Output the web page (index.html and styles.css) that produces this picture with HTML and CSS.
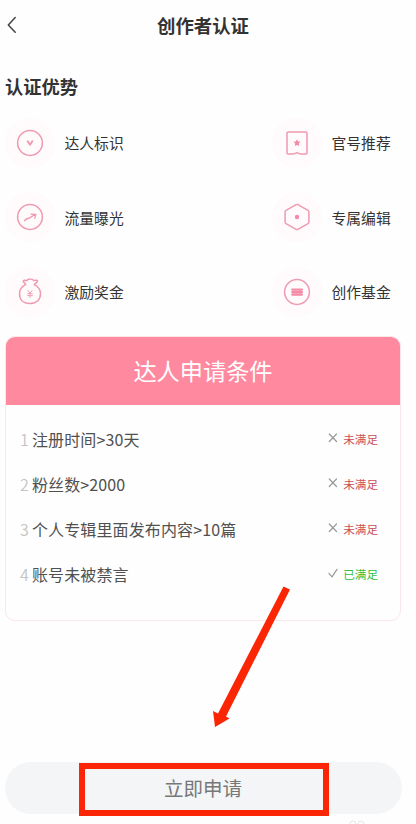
FILE: index.html
```html
<!DOCTYPE html>
<html lang="zh-CN">
<head>
<meta charset="utf-8">
<title>创作者认证</title>
<link rel="stylesheet" href="styles.css">
</head>
<body>
<div class="screen">
  <header class="topbar">
    <svg class="back" viewBox="0 0 10 18"><path d="M8.2 1.5 1.3 9l6.9 7.3"/></svg>
    <h1>创作者认证</h1>
  </header>
  <h2>认证优势</h2>
  <section class="benefits">
    <div class="benefit"><span class="bubble"><svg viewBox="0 0 30 30"><circle cx="15" cy="15" r="12.4"/><path class="thick" d="m12.7 13.2 2.3 3.5 2.3-3.5"/></svg></span><span>达人标识</span></div>
    <div class="benefit"><span class="bubble"><svg viewBox="0 0 30 30"><path d="M6.3 3.9h17.4q1.3 0 1.3 1.3v19.9q0 1-1 1h-5.5L15 24.6l-3.5 1.5H6q-1 0-1-1V5.2q0-1.3 1.3-1.3Z"/><path class="solid" d="m15 11.2 1.1 2.3 2.5.3-1.8 1.8.4 2.5-2.2-1.2-2.2 1.2.4-2.5-1.8-1.8 2.5-.3Z"/></svg></span><span>官号推荐</span></div>
    <div class="benefit"><span class="bubble"><svg viewBox="0 0 30 30"><circle cx="15" cy="15" r="12.4"/><path class="soft" d="M9.4 18.8c2.2-3 4.2-2.1 6-3.4 1.4-1 2.6-1.7 5-2.8m-4.5-.5 4.9.4-1 3.8"/></svg></span><span>流量曝光</span></div>
    <div class="benefit"><span class="bubble"><svg viewBox="0 0 30 30"><path d="M14.1 2.7q.9-.5 1.8 0L26 8.4q.9.5.9 1.5v10.2q0 1-.9 1.5l-10.1 5.7q-.9.5-1.8 0L4 21.6q-.9-.5-.9-1.5V9.9q0-1 .9-1.5Z"/><circle class="solid" cx="15" cy="15" r="2.2"/></svg></span><span>专属编辑</span></div>
    <div class="benefit"><span class="bubble"><svg viewBox="0 0 30 30"><path d="M10.8 7.4 8.4 4.8q-.4-1.4 1.2-1.6l2.3.3q1-1.6 3.6-1.5 2 0 3.1 1.4l2.8-.2q1.5.3.8 1.7l-3 2.7m-8.4-.2c-4.5 2.5-6.3 6-6.3 9.3 0 6.6 4.5 9.9 10.5 9.9s10.5-3.5 10.5-9.9c0-3.4-2-7-6.300-9.100"/><path class="soft thin" d="m13 13.600 2 2.600 2-2.600m-2 2.600v4.300m-2.400-3.800h4.800m-4.800 1.900h4.800"/></svg></span><span>激励奖金</span></div>
    <div class="benefit"><span class="bubble"><svg viewBox="0 0 30 30"><circle cx="15" cy="15" r="12.4"/><path class="bars" d="M10.2 12.6h9.800M10.200 15.100h9.800M10.200 17.600h9.800"/></svg></span><span>创作基金</span></div>
  </section>
  <section class="card">
    <h3>达人申请条件</h3>
    <ol>
      <li><i>1</i><span class="rule">注册时间&gt;30天</span><svg class="mark" viewBox="0 0 10 10"><path d="m1.3 1 7.2 7.5m0-7.5L1.3 8.5"/></svg><b>未满足</b></li>
      <li><i>2</i><span class="rule">粉丝数&gt;2000</span><svg class="mark" viewBox="0 0 10 10"><path d="m1.3 1 7.2 7.5m0-7.5L1.3 8.5"/></svg><b>未满足</b></li>
      <li><i>3</i><span class="rule">个人专辑里面发布内容&gt;10篇</span><svg class="mark" viewBox="0 0 10 10"><path d="m1.3 1 7.2 7.5m0-7.5L1.3 8.5"/></svg><b>未满足</b></li>
      <li><i>4</i><span class="rule">账号未被禁言</span><svg class="mark" viewBox="0 0 10 10"><path d="m1 5.3 3 3.5L9 1.3"/></svg><b class="ok">已满足</b></li>
    </ol>
  </section>
  <button class="apply">立即申请<span class="highlight"></span></button>
  <svg class="pointer" viewBox="0 0 80 144"><path d="m73.500 .5 6.500 3L16 130.500l3.500 2L5 141 3 125l5 2.500Z"/></svg>
  <svg class="trace" viewBox="0 0 16 5"><path d="M1 5V4q0-3 3-3t3 3v1m2 0V4q0-3 3-3t3 3v1"/></svg>
</div>
</body>
</html>
```
FILE: styles.css
```css
* { box-sizing: border-box; }
body {
  margin: 0;
  background: #fefefe;
  color: #333;
  font-family: "Noto Sans CJK SC", sans-serif;
}
svg { fill: none; stroke-linecap: round; stroke-linejoin: round; }
h1, h2, h3, ol { margin: 0; padding: 0; }
.screen {
  position: relative;
  width: 416px;
  height: 824px;
  padding: 0 15px 0 5px;
  overflow: hidden;
}
.topbar {
  display: flex;
  align-items: center;
  height: 50px;
  padding-left: 2px;
}
.back { width: 10px; height: 18px; stroke: #444; stroke-width: 1.5; }
h1 { flex: 1; padding-right: 12px; text-align: center; font-size: 18.4px; font-weight: 700; line-height: 50px; }
h2 { margin-top: 21px; font-size: 18.3px; font-weight: 700; line-height: 30px; }
.benefits {
  display: grid;
  grid-template-columns: 267px auto;
  grid-auto-rows: 74.5px;
  margin-top: 4.5px;
}
.benefit { display: flex; align-items: center; gap: 9.5px; font-size: 14.8px; white-space: nowrap; }
.bubble {
  display: flex;
  align-items: center;
  justify-content: center;
  width: 50px;
  height: 50px;
  border-radius: 50%;
  background: #fffafb;
}
.bubble svg { width: 30px; height: 30px; stroke: #ee9bb1; stroke-width: 1.5; }
.bubble .solid { fill: #f38ba7; stroke: none; }
.bubble .thick { stroke-width: 1.9; }
.bubble .soft { stroke-width: 1.3; }
.bubble .thin { stroke-width: .9; }
.bubble .bars { stroke: #f38ba7; stroke-width: 2.1; }
.card {
  height: 285px;
  margin-top: 6.5px;
  border: 1px solid #fbe6ea;
  border-radius: 10px;
  overflow: hidden;
}
h3 {
  height: 68px;
  background: #ff899f;
  color: #fff;
  font-size: 23.2px;
  font-weight: 400;
  line-height: 67px;
  text-align: center;
}
ol { padding: 11.5px 22px 0 14px; list-style: none; }
li { display: flex; align-items: center; height: 45px; font-size: 16px; color: #505050; }
i { width: 12px; font-style: normal; color: #c4c4c4; font-weight: 350; }
.rule { flex: 1; letter-spacing: .12px; }
.mark { width: 10px; height: 10px; margin: 0 5.5px 1px 0; stroke: #999; stroke-width: 1.2; }
b { font-size: 11.6px; font-weight: 400; line-height: 16px; margin-top: 1px; color: #c94f58; }
.ok { color: #35bd3c; }
.apply {
  position: relative;
  display: block;
  width: 397px;
  height: 52px;
  margin: 141px 0 0 -.5px;
  padding: 0;
  border: 0;
  border-radius: 26px;
  background: #f3f5f7;
  color: #777;
  font: 19.5px/52px "Noto Sans CJK SC", sans-serif;
}
.highlight { position: absolute; left: 74.5px; top: 1.5px; width: 249.5px; height: 53px; border: 6px solid #fb2605; }
.pointer { position: absolute; left: 210px; top: 586px; width: 80px; height: 144px; fill: #fb2605; }
.trace { position: absolute; left: 349px; top: 820px; width: 16px; height: 5px; stroke: #e5e5e5; }
```
